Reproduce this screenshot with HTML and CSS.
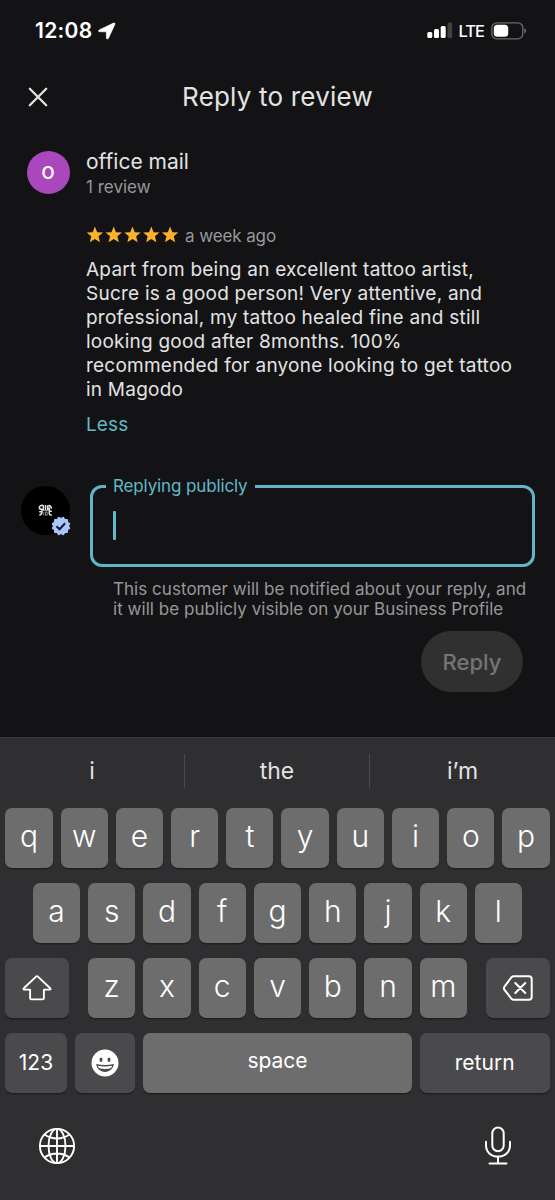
FILE: index.html
```html
<!DOCTYPE html>
<html lang="en">
<head>
<meta charset="utf-8">
<title>Reply to review</title>
<link rel="stylesheet" href="styles.css">
</head>
<body>
<div class="screen">
  <header class="status">
    <span class="clock">12:08</span>
    <svg class="loc" width="18" height="18" viewBox="0 0 18 18"><path d="M1.200 7.900 15.600 1c.9-.4 1.700.4 1.300 1.300L10.500 16.200c-.6 1.200-2.100 1-2.100-.3L8.300 9.800 1.700 9.700c-1.400 0-1.700-1.200-.5-1.800z" fill="#fff" stroke="#fff" stroke-width=".6"/></svg>
    <svg class="signal" width="26" height="17" viewBox="0 0 26 17"><g fill="#fff"><rect x=".3" y="10" width="5" height="6" rx="1.500"/><rect x="7" y="7" width="5" height="9" rx="1.500"/><rect x="13.700" y="4" width="5" height="12" rx="1.500"/><rect x="20.500" y=".5" width="4.700" height="15.500" rx="1.500" fill="#414143"/></g></svg>
    <span class="lte">LTE</span>
    <svg class="battery" width="36" height="18" viewBox="0 0 36 18"><rect x=".8" y=".8" width="31" height="16" rx="5" fill="none" stroke="#6c6c6e" stroke-width="1.300"/><rect x="2.800" y="2.800" width="14.400" height="12" rx="3.500" fill="#fff"/><path d="M33.300 6.300c2.200.8 2.200 4.300 0 5.100z" fill="#77777a"/></svg>
  </header>

  <div class="titlebar">
    <svg class="close" width="20" height="20" viewBox="0 0 20 20"><path d="m1.800 1.800 16.400 16.400M18.200 1.800 1.800 18.200" stroke="#e3e3e3" stroke-width="2.300" stroke-linecap="round"/></svg>
    <h1 class="title">Reply to review</h1>
  </div>

  <section class="reviewer">
    <div class="avatar">O</div>
    <div class="who">
      <div class="name">office mail</div>
      <div class="count">1 review</div>
    </div>
  </section>

  <section class="review">
    <div class="rating">
      <svg class="stars" width="94" height="18" viewBox="0 0 94 18"><defs><path id="star" d="m8.900.6 2.250 5.550 5.950.4-4.550 3.800L14 16.200 8.900 13 3.800 16.200l1.450-5.850L.7 6.550l5.950-.4z"/></defs><g fill="#fbb32b"><use href="#star"/><use href="#star" x="18.800"/><use href="#star" x="37.600"/><use href="#star" x="56.400"/><use href="#star" x="75.200"/></g></svg>
      <span class="ago">a week ago</span>
    </div>
    <p class="body">Apart from being an excellent tattoo artist,<br>Sucre is a good person! Very attentive, and<br>professional, my tattoo healed fine and still<br>looking good after 8months. 100%<br>recommended for anyone looking to get tattoo<br>in Magodo</p>
    <a class="less">Less</a>
  </section>

  <section class="reply">
    <div class="owner">
      <svg class="mark" width="15" height="13" viewBox="0 0 15 13"><path d="M5 1.400C3 1.200 1.300 2 1.300 3.600S2.600 5.500 4 5.600v2.200c0 1.600-.9 2.900-2.600 3.400M1.200 7.800h2.300M5.300 6.300V1.300M7.500 6.300V1.100M9.700 6.300V1.300M10.500 1.600c1.800.2 2.800 1.200 3 3M11.300 3.500v6c0 1.200.9 1.700 2.500 1.700M11.300 7.300h2.600" fill="none" stroke="#e4e4e4" stroke-width="1.500"/><path d="M4.800 6.500h5.600M5.800 7.800v3.700M7.600 7.800h1.600v3.500H7.600z" fill="none" stroke="#aaa" stroke-width=".8"/></svg>
      <svg class="badge" width="20" height="20" viewBox="0 0 20 20"><g fill="#a9c7fb"><rect x="3" y="3" width="14" height="14" rx="1"/><rect x="3" y="3" width="14" height="14" rx="1" transform="rotate(30 10 10)"/><rect x="3" y="3" width="14" height="14" rx="1" transform="rotate(60 10 10)"/></g><path d="m5.500 10.200 3.100 3 5.500-5.900" fill="none" stroke="#111b2d" stroke-width="2"/></svg>
    </div>
    <div class="field-col">
      <fieldset class="field"><legend class="label">Replying publicly</legend><div class="caret"></div></fieldset>
      <p class="hint">This customer will be notified about your reply, and<br>it will be publicly visible on your Business Profile</p>
      <button class="send">Reply</button>
    </div>
  </section>

  <section class="keyboard">
    <div class="suggest"><span>i</span><span>the</span><span>i’m</span></div>
    <div class="row"><kbd>q</kbd><kbd>w</kbd><kbd>e</kbd><kbd>r</kbd><kbd>t</kbd><kbd>y</kbd><kbd>u</kbd><kbd>i</kbd><kbd>o</kbd><kbd>p</kbd></div>
    <div class="row mid"><kbd>a</kbd><kbd>s</kbd><kbd>d</kbd><kbd>f</kbd><kbd>g</kbd><kbd>h</kbd><kbd>j</kbd><kbd>k</kbd><kbd>l</kbd></div>
    <div class="row low">
      <kbd class="dark shift"><svg width="30" height="26" viewBox="0 0 30 26"><path d="M14.100 1.600 1.800 13.300c-.6.700-.4 1.300.4 1.300h5.900v8.300c0 1 .5 1.500 1.500 1.500h10.800c1 0 1.500-.5 1.500-1.500v-8.300h5.900c.8 0 1-.6.400-1.300L15.900 1.600c-.6-.5-1.200-.5-1.800 0z" fill="none" stroke="#fff" stroke-width="1.900" stroke-linejoin="round"/></svg></kbd>
      <kbd>z</kbd><kbd>x</kbd><kbd>c</kbd><kbd>v</kbd><kbd>b</kbd><kbd>n</kbd><kbd>m</kbd>
      <kbd class="dark del"><svg width="30" height="26" viewBox="0 0 30 26"><path d="M10.500 1.300h15.200c2 0 3 1 3 3v17.400c0 2-1 3-3 3H10.500c-.8 0-1.400-.3-2-.9l-7-9c-.8-1-.8-2.200 0-3.200l7-9.400c.6-.6 1.200-.9 2-.9zM12.300 8l10 10M22.300 8l-10 10" fill="none" stroke="#fff" stroke-width="2" stroke-linecap="round"/></svg></kbd>
    </div>
    <div class="row bottom">
      <kbd class="dark word">123</kbd>
      <kbd class="dark"><svg width="28" height="28" viewBox="0 0 28 28"><circle cx="14" cy="14" r="13.500" fill="#fff"/><ellipse cx="10" cy="10.800" rx="1.500" ry="2.200" fill="#4a4a4c"/><ellipse cx="18" cy="10.800" rx="1.500" ry="2.200" fill="#4a4a4c"/><path d="M5.200 15.100c5.700 1.300 11.900 1.300 17.600 0-.6 4.800-4 7.800-8.800 7.800s-8.200-3-8.800-7.800z" fill="#4a4a4c"/><path d="M6.800 16.700c4.700 1 9.700 1 14.400 0-.4 1.100-.9 2-1.500 2.600-3.600.9-7.800.9-11.400 0-.6-.6-1.100-1.500-1.500-2.600z" fill="#fff"/></svg></kbd>
      <kbd class="word space">space</kbd>
      <kbd class="dark word">return</kbd>
    </div>
    <div class="tools">
      <svg width="38" height="38" viewBox="0 0 38 38" fill="none" stroke="#fff" stroke-width="1.900"><circle cx="19" cy="19" r="17.100"/><ellipse cx="19" cy="19" rx="8.500" ry="17.100"/><path d="M19 1.900v34.200M1.900 19h34.200M6.500 7.500c7.500 5.300 17.500 5.300 25 0M6.500 30.500c7.500-5.300 17.500-5.300 25 0"/></svg>
      <svg width="28" height="40" viewBox="0 0 28 40" fill="none" stroke="#fff" stroke-width="2" stroke-linecap="round"><rect x="8.300" y="1.600" width="11.400" height="23.600" rx="5.700"/><path d="M2 15.700v3.600c0 6.700 5 11.300 12 11.300s12-4.600 12-11.300v-3.600M14 30.600v6.700M5.500 37.500h17"/></svg>
    </div>
  </section>
</div>
</body>
</html>
```
FILE: styles.css
```css
* { box-sizing: border-box; }
body { margin: 0; background: #131315; color: #e3e3e3; font-family: Inter, "Liberation Sans", sans-serif; }
.screen { width: 555px; height: 1200px; display: flex; flex-direction: column; overflow: hidden; white-space: nowrap; }
h1, p { margin: 0; font-weight: 400; }
svg { display: block; flex: none; }

.status { height: 61px; padding: 0 28px 0 35px; display: flex; align-items: center; color: #fff; }
.clock { font-size: 21px; font-weight: 600; letter-spacing: .3px; }
.loc { margin-left: 6px; }
.signal { margin-left: auto; }
.lte { margin: 1px 7px 0 6px; font-size: 16.500px; font-weight: 500; letter-spacing: -1px; }

.titlebar { height: 72px; display: grid; grid-template-columns: 75px 405px 75px; align-items: center; }
.close { margin: -1px 0 0 27.500px; }
.title { text-align: center; font-size: 26px; line-height: 32px; letter-spacing: .2px; margin-top: -1px; }

.reviewer { height: 80px; padding: 18px 0 0 26.500px; display: flex; gap: 16.500px; }
.avatar { width: 43px; height: 43px; border-radius: 50%; background: #ab47bc; color: #fff; font-size: 17px; font-weight: 600; line-height: 44px; text-align: center; }
.name { margin-top: -2px; font-size: 21px; line-height: 26px; }
.count { font-size: 17px; line-height: 24px; color: #98989a; }

.review { height: 257px; padding: 11px 0 0 86px; }
.rating { display: flex; align-items: center; height: 22px; gap: 5px; }
.ago { padding-top: 1px; font-size: 17px; color: #98989a; letter-spacing: -.1px; }
.body { margin-top: 12px; font-size: 19px; line-height: 24px; letter-spacing: .230px; }
.less { display: block; margin-top: 11px; font-size: 19px; line-height: 24px; color: #61b9c9; letter-spacing: .1px; }

.reply { height: 266.500px; padding: 6px 20px 0 21px; display: flex; gap: 20px; }
.owner { position: relative; width: 49px; height: 49px; margin-top: 9.500px; border-radius: 50%; background: #000; display: grid; place-items: center; }
.badge { position: absolute; left: 30px; top: 30px; }
.field-col { width: 445px; display: flex; flex-direction: column; }
.field { height: 91px; margin: 0; padding: 0 20px; border: 3px solid #61b4ca; border-radius: 12px; }
.label { margin-left: -7px; padding: 0 7px; font-size: 17px; line-height: 20px; letter-spacing: -.13px; color: #61b9c9; }
.caret { width: 3px; height: 29px; margin-top: 15px; border-radius: 1px; background: #61b9c9; }
.hint { margin: 12px 0 0 23px; font-size: 17px; line-height: 20px; letter-spacing: .04px; color: #98989a; }
.send { align-self: flex-end; margin: 12px 12px 0 0; width: 102px; height: 61px; border: 0; border-radius: 31px; background: #303031; color: #757576; font: 500 22px Inter, sans-serif; }

.keyboard { height: 463.500px; background: #2f2f31; border-top: 1px solid #39393b; display: flex; flex-direction: column; }
.suggest { height: 70px; display: grid; grid-template-columns: 184px 185px 186px; padding: 16px 0 20px; text-align: center; font-size: 23px; line-height: 34px; }
.suggest span + span { border-left: 1px solid #4a4a4c; }
.row { height: 60.500px; margin-bottom: 14.500px; padding: 0 5.300px; display: grid; grid-template-columns: repeat(10, 1fr); gap: 8px; }
.mid { padding: 0 33px; grid-template-columns: repeat(9, 1fr); }
.low { grid-template-columns: 74.700px repeat(7, 1fr) 74.700px; }
.shift { margin-right: 10.700px; }
.del { margin-left: 10.700px; }
.bottom { grid-template-columns: 61.400px 60.600px 268.400px 1fr; }
kbd { display: flex; align-items: center; justify-content: center; padding-bottom: 4px; border-radius: 7px; background: #6d6d6e; box-shadow: 0 1.500px 0 #1f1f21; color: #fff; font: 350 30px Inter, sans-serif; }
kbd.dark { background: #4a4a4c; padding-bottom: 0; }
kbd.word { font-size: 21px; font-weight: 400; }
.tools { display: flex; justify-content: space-between; align-items: center; padding: 5px 43px 0 38px; height: 72px; }
```
